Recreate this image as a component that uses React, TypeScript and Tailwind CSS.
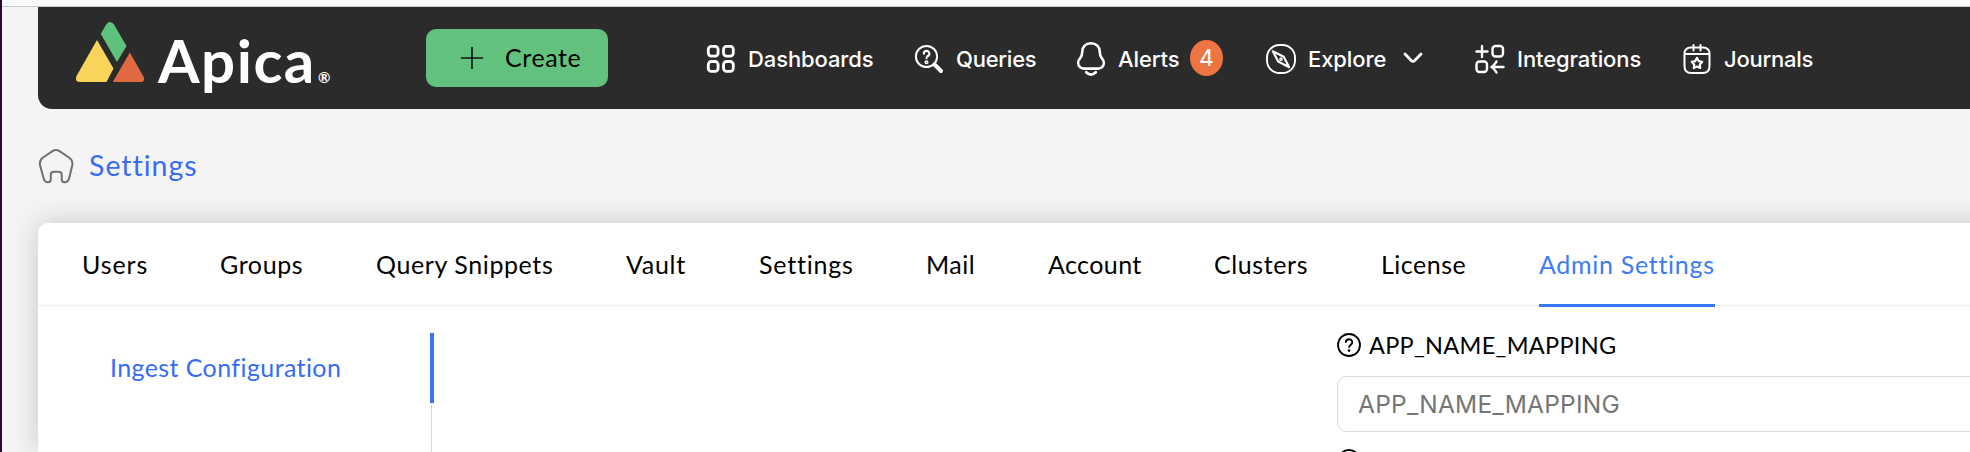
import React from "react";

const tabs = [
  { label: "Users", cls: "w-[65px] mr-[73px] tracking-[0.9px]" },
  { label: "Groups", cls: "w-[83px] mr-[73px] tracking-[0.6px]" },
  { label: "Query Snippets", cls: "w-[177px] mr-[73px] tracking-[0.6px]" },
  { label: "Vault", cls: "w-[60px] mr-[73px] tracking-[0.7px]" },
  { label: "Settings", cls: "w-[94px] mr-[73px] tracking-[0.8px]" },
  { label: "Mail", cls: "w-[49px] mr-[73px] tracking-[0.5px]" },
  { label: "Account", cls: "w-[93px] mr-[73px] tracking-[0.4px]" },
  { label: "Clusters", cls: "w-[94px] mr-[73px] tracking-[0.6px]" },
  { label: "License", cls: "w-[85px] mr-[73px] tracking-[0.5px]" },
];

function Logo() {
  return (
    <svg className="h-[62px] w-[70px] shrink-0" viewBox="75 21 70 62">
      <path d="M105.5 25.5Q107.5 22 110 22Q112.5 22 114 24.5L126.5 46L117 62L100.8 34Z" fill="#5fc27c" />
      <path d="M97 40L113.5 68.500L106.500 82H80Q74.500 82 76.500 76Z" fill="#f9d45a" />
      <path d="M129.800 52.500L143.500 76.500Q145.500 82 140.500 82H112.800Z" fill="#df6a41" />
    </svg>
  );
}

function GridIcon() {
  return (
    <svg className="h-[30px] w-[30px] shrink-0" viewBox="0 0 30 30" fill="none" stroke="#fff" strokeWidth="2.800">
      <rect x="2.300" y="2.300" width="9.800" height="9.800" rx="3" />
      <rect x="17.500" y="2.300" width="9.800" height="9.800" rx="3" />
      <rect x="2.300" y="17.500" width="9.800" height="9.800" rx="3" />
      <rect x="17.500" y="17.500" width="9.800" height="9.800" rx="3" />
    </svg>
  );
}

function QueryIcon() {
  return (
    <svg className="h-[30px] w-[30px] shrink-0" viewBox="0 0 30 30" fill="none" stroke="#fff" strokeLinecap="round">
      <circle cx="12.500" cy="12.500" r="10.600" strokeWidth="2" />
      <path d="M20.500 20.500L27 27" strokeWidth="4" />
      <path d="M9.900 9.700A2.700 2.700 0 1 1 13.800 12Q12.500 12.800 12.500 14.200" strokeWidth="2.200" />
      <circle cx="12.500" cy="18.200" r="1.300" strokeWidth="1.500" />
    </svg>
  );
}

function BellIcon() {
  return (
    <svg className="h-[36px] w-[30px] shrink-0" viewBox="0 0 30 36" fill="none" stroke="#fff" strokeWidth="2.600" strokeLinecap="round" strokeLinejoin="round">
      <path d="M15 2.200C9.500 2.200 6.400 6 6.300 10.500C6.200 14 6 15.200 4.200 17.200C1.500 20.200 1.700 24 4 26.200C5 27.200 6.500 27.600 8 27.600H22C23.500 27.600 25 27.200 26 26.200C28.300 24 28.500 20.200 25.800 17.200C24 15.200 23.800 14 23.700 10.500C23.600 6 20.500 2.200 15 2.200Z" />
      <path d="M10.200 31.200Q15 36.200 19.800 31.200" strokeWidth="2.700" />
    </svg>
  );
}

function CompassIcon() {
  return (
    <svg className="h-[32px] w-[32px] shrink-0" viewBox="0 0 32 32" fill="none" stroke="#fff" strokeLinejoin="round">
      <rect x="2" y="2" width="28" height="28" rx="12.500" strokeWidth="1.900" />
      <path d="M7.800 8.200L18.700 13.700L24.200 24.200L13.200 18.500Z" strokeWidth="2.100" />
      <circle cx="16" cy="16.200" r="1.100" strokeWidth="1.500" />
    </svg>
  );
}

function IntegrationIcon() {
  return (
    <svg className="h-[32px] w-[32px] shrink-0" viewBox="0 0 32 32" fill="none" stroke="#fff" strokeWidth="2.400" strokeLinecap="round" strokeLinejoin="round">
      <path d="M8 3V14M2.500 8.500H13.500" />
      <rect x="18.500" y="3" width="10.500" height="10.500" rx="3" />
      <rect x="2.500" y="18.500" width="10.500" height="10.500" rx="3" />
      <path d="M29.500 24H17.500M22.500 18.500Q19.500 23 17.500 24Q20.500 25.500 22.500 29.500" />
    </svg>
  );
}

function JournalIcon() {
  return (
    <svg className="h-[32px] w-[30px] shrink-0" viewBox="0 0 30 32" fill="none" stroke="#fff" strokeWidth="2" strokeLinecap="round" strokeLinejoin="round">
      <path d="M9 4.500H21Q27.500 4.500 27.500 11V23Q27.500 30 20.500 30H9.500Q2.500 30 2.500 23V11Q2.500 4.500 9 4.500ZM2.500 11H27.500M11.500 2V7.500M18.500 2V7.500" />
      <path d="M15 14.800L16.700 18.100L20.300 18.800L17.800 21.400L18.200 25L15 23.500L11.800 25L12.200 21.400L9.700 18.800L13.300 18.100Z" strokeWidth="2.200" />
    </svg>
  );
}

function HelpIcon() {
  return (
    <svg className="h-[26px] w-[26px] shrink-0" viewBox="0 0 26 26" fill="none" stroke="#000" strokeWidth="1.800">
      <circle cx="13" cy="13" r="11" />
      <path d="M9.700 10.700C9.700 6 16.300 6.400 16.300 10.200C16.300 12.800 13 12.600 13 15.700" />
      <circle cx="13" cy="18.600" r="1.300" fill="#000" stroke="none" />
    </svg>
  );
}

export default function App() {
  return (
    <div className="flex h-[452px] w-[1970px] overflow-hidden whitespace-nowrap bg-[#f4f4f4] font-['Lato','Open_Sans',sans-serif] text-black">
      <div className="w-[2px] shrink-0 bg-[#2a0a2e]" />
      <div className="flex min-w-0 flex-1 flex-col">
        <div className="h-[7px] shrink-0 border-b border-[#c9cbc9] bg-[#f9fafc]" />
        <header className="ml-[36px] flex h-[102px] w-[1932px] shrink-0 rounded-bl-[14px] bg-[#2b2b2b]">
          <div className="ml-[37px] mt-[14px] flex w-[351px] items-start">
            <Logo />
            <span className="ml-[13px] mt-[4px] w-[160px] text-[60px] font-bold leading-[70px] tracking-[1.5px] text-white">Apica</span>
            <span className="mt-[43px] text-[15px] font-bold leading-[26px] text-white">®</span>
          </div>
          <button className="mt-[22px] flex h-[58px] w-[182px] items-center rounded-[10px] bg-[#62c27d] pl-[35px]">
            <svg className="h-[22px] w-[22px]" viewBox="0 0 22 22" stroke="#111" strokeWidth="1.600">
              <path d="M11 0V22M0 11H22" />
            </svg>
            <span className="mb-[2px] ml-[22px] text-[25px] leading-[30px] tracking-[0.6px]">Create</span>
          </button>
          <nav className="ml-[98px] mt-[3px] flex h-[98px] items-center font-['Inter',sans-serif] text-[22px] font-medium tracking-[-0.1px] text-white">
            <GridIcon />
            <span className="ml-[12px] w-[166px]">Dashboards</span>
            <QueryIcon />
            <span className="ml-[12px] w-[120px] tracking-[-0.25px]">Queries</span>
            <BellIcon />
            <span className="ml-[12px] w-[72px]">Alerts</span>
            <span className="mb-[2px] flex h-[36px] w-[33px] items-center justify-center rounded-[50%] bg-[#ee7444] text-[23px] font-normal">4</span>
            <span className="w-[42px]" />
            <CompassIcon />
            <span className="ml-[11px] w-[95px]">Explore</span>
            <svg className="mb-[2px] h-[12px] w-[20px]" viewBox="0 0 20 12" fill="none" stroke="#fff" strokeWidth="2.800" strokeLinecap="round" strokeLinejoin="round">
              <path d="M2 2L8.500 8.700Q10 10 11.500 8.700L18 2" />
            </svg>
            <span className="w-[51px]" />
            <IntegrationIcon />
            <span className="ml-[11px] w-[165px]">Integrations</span>
            <JournalIcon />
            <span className="ml-[12px] tracking-[-0.25px]">Journals</span>
          </nav>
        </header>
        <div className="ml-[36px] mt-[36px] flex h-[42px] shrink-0 items-center">
          <svg className="h-[36px] w-[36px]" viewBox="0 0 36 36" fill="none" stroke="#707070" strokeWidth="2" strokeLinejoin="round">
            <path d="M14.500 3.200Q18 1 21.500 3.200L31 9.500Q35 12.200 34.300 17L31.200 30Q30.300 34.300 26.500 34.300Q23.700 34.300 23.700 31V27Q23.700 23.800 20.500 23.800H16Q12.800 23.800 12.800 27V31Q12.800 34.300 10 34.300Q6.500 34.300 5.500 30L2 17Q1.200 12.200 5 9.500Z" />
          </svg>
          <span className="mb-[3px] ml-[15px] text-[28.5px] leading-[36px] tracking-[1px] text-[#386cf5]">Settings</span>
        </div>
        <main className="ml-[36px] mt-[36px] flex w-[1960px] flex-1 flex-col rounded-tl-[10px] bg-white shadow-[0_0_28px_rgba(0,0,0,0.18)]">
          <div className="flex h-[83px] shrink-0 border-b border-[#eeeeee] pl-[44px] text-[25px] leading-[82px]">
            {tabs.map((t) => (
              <span key={t.label} className={t.cls}>{t.label}</span>
            ))}
            <span className="h-[84px] w-[176px] border-b-[3px] border-[#3478f6] tracking-[0.7px] text-[#3b7cf6]">Admin Settings</span>
          </div>
          <div className="flex flex-1">
            <aside className="mt-[27px] flex w-[396px] flex-col">
              <div className="h-[70px] border-r-4 border-[#3478f6] pl-[72px] text-[25px] leading-[69px] tracking-[0.4px] text-[#386cf5]">Ingest Configuration</div>
              <div className="mr-[2px] flex-1 border-r border-[#d6d6d6]" />
            </aside>
            <section className="ml-[902px] mt-[26px] flex w-[662px] flex-col">
              <div className="flex h-[26px] items-center">
                <HelpIcon />
                <span className="ml-[7px] text-[23.5px] leading-[26px] tracking-[0.3px]">APP_NAME_MAPPING</span>
              </div>
              <div className="ml-[1px] mt-[18px] h-[56px] shrink-0 rounded-[10px] border border-[#d9d9d9] pl-[20px] font-['Inter',sans-serif] text-[24.5px] leading-[55px] tracking-[0.25px] text-[#757575]">APP_NAME_MAPPING</div>
              <div className="mt-[16px] h-[4px] overflow-hidden">
                <HelpIcon />
              </div>
            </section>
          </div>
        </main>
      </div>
    </div>
  );
}
